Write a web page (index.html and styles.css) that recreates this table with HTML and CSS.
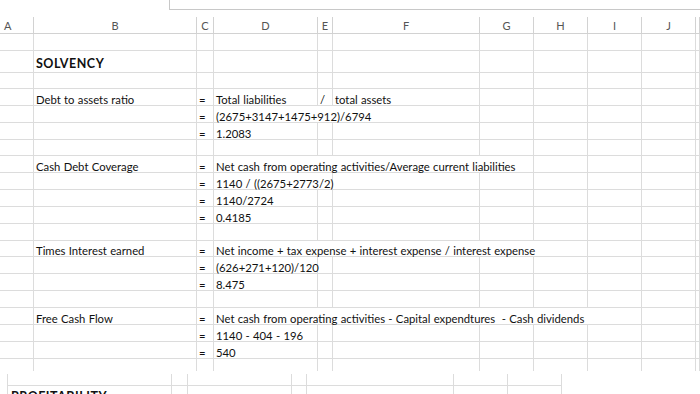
FILE: index.html
```html
<!DOCTYPE html>
<html>
<head>
<meta charset="utf-8">
<link rel="stylesheet" href="styles.css">
</head>
<body>
<div class="fbar"><div class="fbar-box"></div></div>
<div class="sheet">
  <div class="row hdr">
    <div class="cell">A</div><div class="cell">B</div><div class="cell">C</div><div class="cell">D</div><div class="cell">E</div><div class="cell">F</div><div class="cell">G</div><div class="cell">H</div><div class="cell">I</div><div class="cell">J</div><div class="cell"></div>
  </div>
  <div class="row r17">
    <div class="cell"></div><div class="cell"></div><div class="cell"></div><div class="cell"></div><div class="cell"></div><div class="cell"></div><div class="cell"></div><div class="cell"></div><div class="cell"></div><div class="cell"></div><div class="cell"></div>
  </div>
  <div class="row r22">
    <div class="cell"></div><div class="cell title">SOLVENCY</div><div class="cell"></div><div class="cell"></div><div class="cell"></div><div class="cell"></div><div class="cell"></div><div class="cell"></div><div class="cell"></div><div class="cell"></div><div class="cell"></div>
  </div>
  <div class="row r16">
    <div class="cell"></div><div class="cell"></div><div class="cell"></div><div class="cell"></div><div class="cell"></div><div class="cell"></div><div class="cell"></div><div class="cell"></div><div class="cell"></div><div class="cell"></div><div class="cell"></div>
  </div>

  <div class="row">
    <div class="cell"></div><div class="cell">Debt to assets ratio</div><div class="cell">=</div><div class="cell">Total liabilities</div><div class="cell">/</div><div class="cell">total assets</div><div class="cell"></div><div class="cell"></div><div class="cell"></div><div class="cell"></div><div class="cell"></div>
  </div>
  <div class="row">
    <div class="cell"></div><div class="cell"></div><div class="cell">=</div><div class="cell s3">(2675+3147+1475+912)/6794</div><div class="cell"></div><div class="cell"></div><div class="cell"></div><div class="cell"></div><div class="cell"></div>
  </div>
  <div class="row">
    <div class="cell"></div><div class="cell"></div><div class="cell">=</div><div class="cell">1.2083</div><div class="cell"></div><div class="cell"></div><div class="cell"></div><div class="cell"></div><div class="cell"></div><div class="cell"></div><div class="cell"></div>
  </div>
  <div class="row">
    <div class="cell"></div><div class="cell"></div><div class="cell"></div><div class="cell"></div><div class="cell"></div><div class="cell"></div><div class="cell"></div><div class="cell"></div><div class="cell"></div><div class="cell"></div><div class="cell"></div>
  </div>

  <div class="row">
    <div class="cell"></div><div class="cell">Cash Debt Coverage</div><div class="cell">=</div><div class="cell s4">Net cash from operating activities/Average current liabilities</div><div class="cell"></div><div class="cell"></div><div class="cell"></div><div class="cell"></div>
  </div>
  <div class="row">
    <div class="cell"></div><div class="cell"></div><div class="cell">=</div><div class="cell s2">1140 / ((2675+2773/2)</div><div class="cell"></div><div class="cell"></div><div class="cell"></div><div class="cell"></div><div class="cell"></div><div class="cell"></div>
  </div>
  <div class="row">
    <div class="cell"></div><div class="cell"></div><div class="cell">=</div><div class="cell">1140/2724</div><div class="cell"></div><div class="cell"></div><div class="cell"></div><div class="cell"></div><div class="cell"></div><div class="cell"></div><div class="cell"></div>
  </div>
  <div class="row">
    <div class="cell"></div><div class="cell"></div><div class="cell">=</div><div class="cell">0.4185</div><div class="cell"></div><div class="cell"></div><div class="cell"></div><div class="cell"></div><div class="cell"></div><div class="cell"></div><div class="cell"></div>
  </div>
  <div class="row">
    <div class="cell"></div><div class="cell"></div><div class="cell"></div><div class="cell"></div><div class="cell"></div><div class="cell"></div><div class="cell"></div><div class="cell"></div><div class="cell"></div><div class="cell"></div><div class="cell"></div>
  </div>

  <div class="row">
    <div class="cell"></div><div class="cell">Times Interest earned</div><div class="cell">=</div><div class="cell s5">Net income + tax expense + interest expense / interest expense</div><div class="cell"></div><div class="cell"></div><div class="cell"></div>
  </div>
  <div class="row">
    <div class="cell"></div><div class="cell"></div><div class="cell">=</div><div class="cell">(626+271+120)/120</div><div class="cell"></div><div class="cell"></div><div class="cell"></div><div class="cell"></div><div class="cell"></div><div class="cell"></div><div class="cell"></div>
  </div>
  <div class="row">
    <div class="cell"></div><div class="cell"></div><div class="cell">=</div><div class="cell">8.475</div><div class="cell"></div><div class="cell"></div><div class="cell"></div><div class="cell"></div><div class="cell"></div><div class="cell"></div><div class="cell"></div>
  </div>
  <div class="row">
    <div class="cell"></div><div class="cell"></div><div class="cell"></div><div class="cell"></div><div class="cell"></div><div class="cell"></div><div class="cell"></div><div class="cell"></div><div class="cell"></div><div class="cell"></div><div class="cell"></div>
  </div>

  <div class="row">
    <div class="cell"></div><div class="cell">Free Cash Flow</div><div class="cell">=</div><div class="cell s6">Net cash from operating activities - Capital expendtures  - Cash dividends</div><div class="cell"></div><div class="cell"></div>
  </div>
  <div class="row">
    <div class="cell"></div><div class="cell"></div><div class="cell">=</div><div class="cell">1140 - 404 - 196</div><div class="cell"></div><div class="cell"></div><div class="cell"></div><div class="cell"></div><div class="cell"></div><div class="cell"></div><div class="cell"></div>
  </div>
  <div class="row">
    <div class="cell"></div><div class="cell"></div><div class="cell">=</div><div class="cell">540</div><div class="cell"></div><div class="cell"></div><div class="cell"></div><div class="cell"></div><div class="cell"></div><div class="cell"></div><div class="cell"></div>
  </div>
  <div class="row tail">
    <div class="cell"></div><div class="cell"></div><div class="cell"></div><div class="cell"></div><div class="cell"></div><div class="cell"></div><div class="cell"></div><div class="cell"></div><div class="cell"></div><div class="cell"></div><div class="cell"></div>
  </div>
</div>

<div class="frag">
  <div class="frow ftop">
    <div class="cell"></div><div class="cell"></div><div class="cell"></div><div class="cell"></div><div class="cell"></div><div class="cell"></div><div class="cell"></div>
  </div>
  <div class="frow fmain">
    <div class="cell title2">PROFITABILITY</div><div class="cell"></div><div class="cell"></div><div class="cell"></div><div class="cell"></div><div class="cell"></div><div class="cell"></div>
  </div>
</div>
</body>
</html>
```

FILE: styles.css
```css
* {
  box-sizing: border-box;
  margin: 0;
  padding: 0;
}

html, body {
  background: #ffffff;
}

body {
  width: 700px;
  height: 394px;
  overflow: hidden;
  font-family: Lato, "Open Sans", sans-serif;
  color: #111111;
}

.fbar {
  height: 17px;
}

.fbar-box {
  margin-left: 169px;
  height: 10px;
  border-left: 1px solid #c8c8c8;
  border-bottom: 1px solid #c8c8c8;
}

.row {
  display: grid;
  grid-template-columns: 34px 163px 17px 104px 15px 147px 54px 54px 54px 54px 1fr;
  height: 16.85px;
  border-bottom: 1px solid #dcdcdc;
}

.cell {
  border-right: 1px solid #dcdcdc;
  display: flex;
  align-items: flex-end;
  padding: 0 0 0 2px;
  font-size: 11.3px;
  line-height: 10px;
  word-spacing: 0.4px;
  white-space: pre;
  min-width: 0;
}

.s2 { grid-column: span 2; }
.s3 { grid-column: span 3; }
.s4 { grid-column: span 4; }
.s5 { grid-column: span 5; }
.s6 { grid-column: span 6; }

.hdr {
  height: 17px;
  border-bottom: 1px solid #d2d2d2;
}

.hdr .cell {
  justify-content: center;
  align-items: center;
  padding: 1px 0 0 0;
  color: #555555;
  font-size: 11px;
  line-height: 13px;
  border-right-color: #d2d2d2;
}

.hdr .cell:first-child {
  justify-content: flex-start;
  padding-left: 4px;
}

.r17 { height: 17px; }
.r22 { height: 22px; }
.r16 { height: 16px; }

.tail {
  height: 12px;
  border-bottom: none;
}

.title {
  font-weight: 700;
  font-size: 12.5px;
  line-height: 15px;
  letter-spacing: 0.5px;
  padding-bottom: 1.3px;
}

.frag {
  margin: 3px 0 0 7px;
  width: 555px;
  border-left: 1px solid #dcdcdc;
}

.frow {
  display: grid;
  grid-template-columns: 164px 16px 104px 15px 147px 54px 54px;
}

.ftop {
  height: 12px;
  border-bottom: 1px solid #dcdcdc;
}

.fmain {
  height: 20px;
}

.title2 {
  font-weight: 700;
  font-size: 12.5px;
  line-height: 15px;
  letter-spacing: 0.5px;
  align-items: flex-start;
  padding: 3.7px 0 0 3px;
}
```
